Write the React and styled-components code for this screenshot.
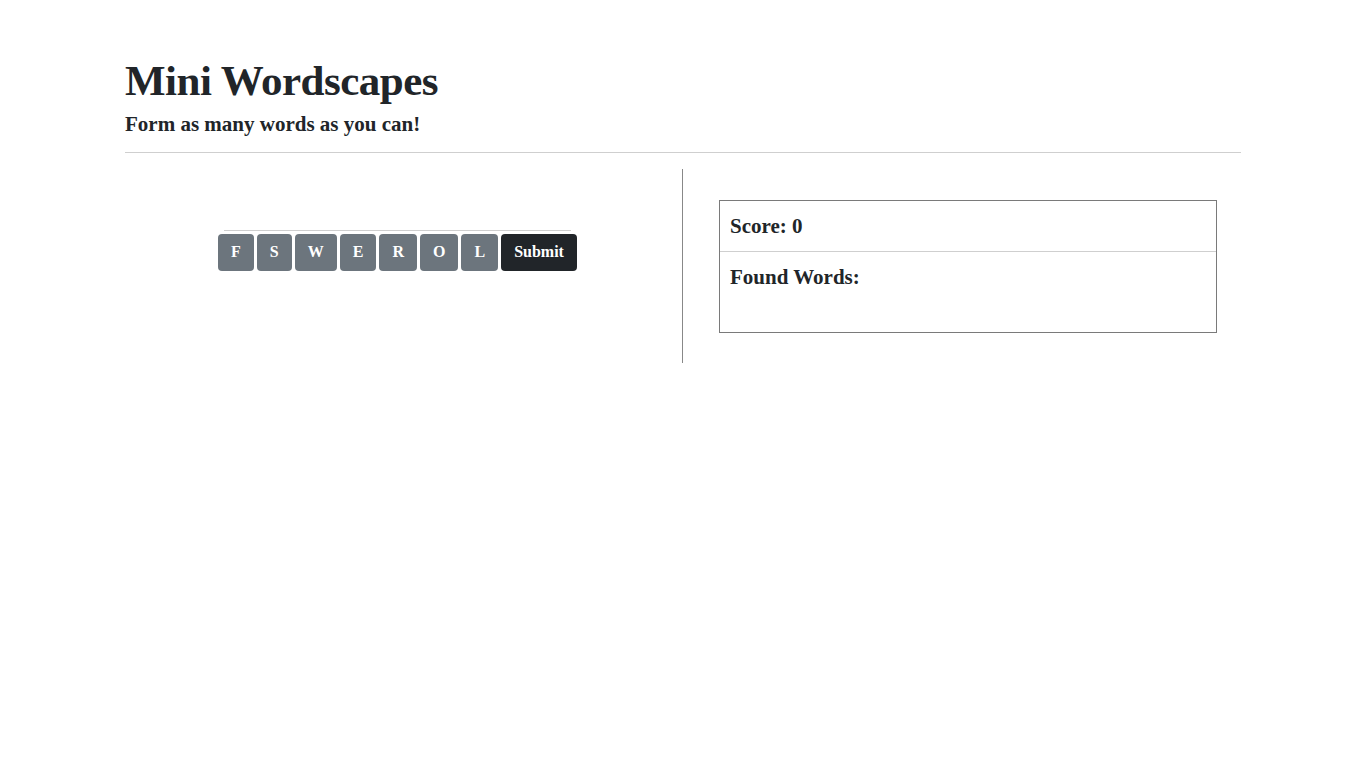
import React, { useState } from 'react';
import styled, { createGlobalStyle } from 'styled-components';

const GlobalStyle = createGlobalStyle`
  body {
    margin: 0;
    background: #fff;
    color: #212529;
    font-family: "Liberation Serif", "DejaVu Serif", serif;
  }
  * { box-sizing: border-box; }
`;

const Container = styled.div`
  width: 1140px;
  margin: 0 auto;
  padding: 55px 12px 0;
`;

const Title = styled.h1`
  margin: 0 0 5px;
  font-size: 43px;
  font-weight: 700;
  line-height: 1.2;
  letter-spacing: -0.5px;
`;

const Subtitle = styled.h5`
  margin: 0;
  font-size: 21px;
  font-weight: 700;
  line-height: 1.2;
`;

const Rule = styled.hr`
  margin: 15px 0 16px;
  border: 0;
  border-top: 1px solid #cfcfcf;
`;

const Row = styled.div`
  display: grid;
  grid-template-columns: 1fr 1fr;
  margin: 0 -12px;
`;

// left half: current word line + letter tiles
const GameCol = styled.div`
  border-right: 1px solid #888;
  padding: 61px 12px 92px;
  display: flex;
  flex-direction: column;
  align-items: center;
`;

const WordLine = styled.div`
  width: 347px;
  height: 4px;
  border-top: 1px solid #cfcfcf;
`;

const Letters = styled.div`
  display: flex;
  gap: 3px;
`;

const TileButton = styled.button`
  height: 37px;
  padding: 0 13px;
  border: 0;
  border-radius: 4px;
  background: ${(p) => (p.$dark ? '#212529' : '#6c757d')};
  color: #fff;
  font-family: inherit;
  font-size: 16px;
  font-weight: 700;
  cursor: pointer;
`;

const ScoreCol = styled.div`
  padding: 31px 36px 30px;
`;

const ScoreBox = styled.div`
  border: 1px solid #7a7a7a;
`;

const Section = styled.div`
  padding: ${(p) => p.$pad};
  border-top: ${(p) => (p.$divider ? '1px solid #cfcfcf' : 'none')};
  min-height: ${(p) => p.$min || 'auto'};
`;

const SectionTitle = styled.h5`
  margin: 0;
  font-size: 21px;
  font-weight: 700;
  line-height: 1.2;
`;

export default function App() {
  const [letters] = useState(['F', 'S', 'W', 'E', 'R', 'O', 'L']);
  const [score] = useState(0);

  return (
    <>
      <GlobalStyle />
      <Container>
        <Title>Mini Wordscapes</Title>
        <Subtitle>Form as many words as you can!</Subtitle>
        <Rule />
        <Row>
          <GameCol>
            <WordLine />
            <Letters>
              {letters.map((l, i) => (
                <TileButton key={i}>{l}</TileButton>
              ))}
              <TileButton $dark>Submit</TileButton>
            </Letters>
          </GameCol>
          <ScoreCol>
            <ScoreBox>
              <Section $pad="13px 10px 12px">
                <SectionTitle>Score: {score}</SectionTitle>
              </Section>
              <Section $divider $pad="13px 10px" $min="81px">
                <SectionTitle>Found Words:</SectionTitle>
              </Section>
            </ScoreBox>
          </ScoreCol>
        </Row>
      </Container>
    </>
  );
}
